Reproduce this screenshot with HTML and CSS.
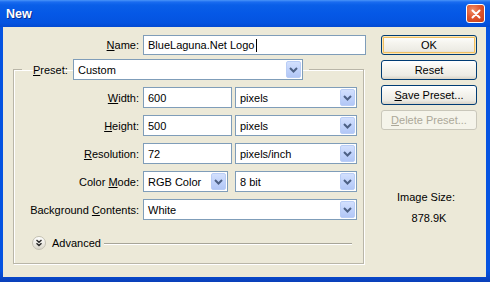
FILE: index.html
```html
<!DOCTYPE html>
<html lang="en">
<head>
    <meta charset="UTF-8">
    <title>New</title>
    <link rel="stylesheet" href="styles.css">
</head>
<body>

    <div class="window">
        <div class="titlebar">
            <span class="title">New</span>
            <span class="close">
                <svg width="16" height="16" viewBox="0 0 16 16">
                    <path d="M4.5 4.5 L11.5 11.5 M11.5 4.5 L4.5 11.5" stroke="#fff" stroke-width="2" stroke-linecap="round"/>
                </svg>
            </span>
        </div>

        <div class="client">
            <div class="main">
                <div class="row">
                    <label class="lbl"><u>N</u>ame:</label>
                    <div class="field name-field">BlueLaguna.Net Logo<span class="caret"></span></div>
                </div>

                <fieldset class="group">
                    <legend class="preset">
                        <label class="preset-lbl"><u>P</u>reset:</label>
                        <div class="combo preset-combo"><span class="val">Custom</span><span class="arrow"><svg width="9" height="6" viewBox="0 0 9 6"><path d="M1 1 L4.5 4.5 L8 1" fill="none" stroke="#4d6185" stroke-width="2"/></svg></span></div>
                    </legend>

                    <div class="row">
                        <label class="lbl"><u>W</u>idth:</label>
                        <div class="field num">600</div>
                        <div class="combo unit"><span class="val">pixels</span><span class="arrow"><svg width="9" height="6" viewBox="0 0 9 6"><path d="M1 1 L4.5 4.5 L8 1" fill="none" stroke="#4d6185" stroke-width="2"/></svg></span></div>
                    </div>

                    <div class="row">
                        <label class="lbl"><u>H</u>eight:</label>
                        <div class="field num">500</div>
                        <div class="combo unit"><span class="val">pixels</span><span class="arrow"><svg width="9" height="6" viewBox="0 0 9 6"><path d="M1 1 L4.5 4.5 L8 1" fill="none" stroke="#4d6185" stroke-width="2"/></svg></span></div>
                    </div>

                    <div class="row">
                        <label class="lbl"><u>R</u>esolution:</label>
                        <div class="field num">72</div>
                        <div class="combo unit"><span class="val">pixels/inch</span><span class="arrow"><svg width="9" height="6" viewBox="0 0 9 6"><path d="M1 1 L4.5 4.5 L8 1" fill="none" stroke="#4d6185" stroke-width="2"/></svg></span></div>
                    </div>

                    <div class="row">
                        <label class="lbl">Color <u>M</u>ode:</label>
                        <div class="combo mode"><span class="val">RGB Color</span><span class="arrow"><svg width="9" height="6" viewBox="0 0 9 6"><path d="M1 1 L4.5 4.5 L8 1" fill="none" stroke="#4d6185" stroke-width="2"/></svg></span></div>
                        <div class="combo unit depth"><span class="val">8 bit</span><span class="arrow"><svg width="9" height="6" viewBox="0 0 9 6"><path d="M1 1 L4.5 4.5 L8 1" fill="none" stroke="#4d6185" stroke-width="2"/></svg></span></div>
                    </div>

                    <div class="row">
                        <label class="lbl">Background <u>C</u>ontents:</label>
                        <div class="combo wide"><span class="val">White</span><span class="arrow"><svg width="9" height="6" viewBox="0 0 9 6"><path d="M1 1 L4.5 4.5 L8 1" fill="none" stroke="#4d6185" stroke-width="2"/></svg></span></div>
                    </div>

                    <div class="advanced">
                        <span class="adv-icon">
                            <svg width="14" height="14" viewBox="0 0 14 14">
                                <path d="M4.5 4 L7 6.3 L9.5 4 M4.5 7.3 L7 9.6 L9.5 7.3" fill="none" stroke="#2b2b2b" stroke-width="1.4"/>
                            </svg>
                        </span>
                        <span class="adv-text">Advanced</span>
                        <span class="adv-line"></span>
                    </div>
                </fieldset>
            </div>

            <div class="side">
                <button class="btn default">OK</button>
                <button class="btn">Reset</button>
                <button class="btn"><u>S</u>ave Preset...</button>
                <button class="btn disabled"><u>D</u>elete Preset...</button>

                <div class="info">
                    <div class="info-lbl">Image Size:</div>
                    <div class="info-val">878.9K</div>
                </div>
            </div>
        </div>
    </div>

</body>
</html>
```

FILE: styles.css
```css
:root {
    --xp-blau: #0553e1;
    --dialog: #ece9d8;
    --feld-rand: #7f9db9;
    --knopf-rand: #003c74;
}

body {
    margin: 0;
    font-family: "Liberation Sans", Arial, sans-serif;
    font-size: 11px;
    color: #000;
}

.window {
    width: 490px;
    height: 282px;
    display: flex;
    flex-direction: column;
    background: linear-gradient(to bottom, var(--xp-blau) 0, var(--xp-blau) 96%, #0a3fb8 100%);
}

.titlebar {
    height: 27px;
    display: flex;
    align-items: center;
    justify-content: space-between;
    padding: 0 5px 0 6px;
    background: linear-gradient(to bottom, #4a95f8 0, #1a6cf0 2px, #0a5fe8 5px, #0558e6 50%, #0453e0 85%, #034ad2 100%);
}

.title {
    color: #fff;
    font-weight: bold;
    font-size: 12.5px;
    text-shadow: 1px 1px 0 #0a2a8a;
    margin-top: 1px;
}

.close {
    width: 17px;
    height: 17px;
    border: 1px solid #fff;
    border-radius: 3px;
    background: radial-gradient(circle at 35% 30%, #f0906a 0, #e0572f 45%, #c63d18 100%);
    display: flex;
    align-items: center;
    justify-content: center;
}

.client {
    flex: 1;
    margin: 0 4px 5px 3px;
    background-color: var(--dialog);
    display: flex;
}

.main {
    width: 368px;
    padding: 8px 0 0 10px;
}

.row {
    display: flex;
    align-items: center;
    height: 21px;
}

.row + .row {
    margin-top: 7px;
}

.main > .row {
    height: 20px;
}

.lbl {
    width: 126px;
    padding-right: 4px;
    text-align: right;
    flex-shrink: 0;
}

.group .lbl {
    width: 125px;
}

.field {
    height: 100%;
    box-sizing: border-box;
    border: 1px solid var(--feld-rand);
    background-color: #fff;
    padding-left: 4px;
    line-height: 18px;
    display: flex;
    align-items: center;
}

.name-field {
    width: 223px;
}

.caret {
    width: 1px;
    height: 13px;
    margin-left: 2px;
    background-color: #000;
}

.num {
    width: 89px;
    margin-right: 3px;
}

.group {
    width: 351px;
    box-sizing: border-box;
    margin: 4px 0 0 0;
    padding: 7px 6px 13px 0;
    border: 1px solid #b9b6a8;
    box-shadow: 1px 1px 0 #fff, inset 1px 1px 0 #fff;
}

.preset {
    display: flex;
    align-items: center;
    margin-left: 8px;
    padding: 0 6px 0 11px;
}

.preset-lbl {
    width: 40px;
}

.combo {
    height: 21px;
    box-sizing: border-box;
    border: 1px solid var(--feld-rand);
    background-color: #fff;
    display: flex;
    align-items: center;
}

.combo .val {
    flex: 1;
    padding-left: 4px;
}

.arrow {
    width: 15px;
    height: 17px;
    margin: 1px;
    box-sizing: border-box;
    border: 1px solid #b9cdf6;
    border-radius: 2px;
    background: linear-gradient(to bottom, #d3e0fd 0, #c1d3fb 50%, #b2c7f6 100%);
    display: flex;
    align-items: center;
    justify-content: center;
}

.preset-combo {
    width: 230px;
}

.unit {
    width: 122px;
}

.mode {
    width: 85px;
}

.depth {
    margin-left: 7px;
}

.wide {
    width: 214px;
}

.advanced {
    display: flex;
    align-items: center;
    height: 14px;
    margin-top: 16px;
    padding-left: 18px;
}

.adv-icon {
    width: 14px;
    height: 14px;
    box-sizing: border-box;
    border: 1px solid #c3c0b2;
    border-radius: 50%;
    background: linear-gradient(to bottom, #ffffff 0, #ebe9e0 60%, #d9d6ca 100%);
    display: flex;
    align-items: center;
    justify-content: center;
}

.adv-icon svg {
    margin: -1px;
}

.adv-text {
    margin-left: 6px;
}

.adv-line {
    flex: 1;
    height: 0;
    margin: 1px 5px 0 3px;
    border-top: 1px solid #a7a598;
    border-bottom: 1px solid #fff;
}

.side {
    width: 96px;
    padding-top: 8px;
    display: flex;
    flex-direction: column;
    gap: 5px;
}

.btn {
    height: 20px;
    width: 96px;
    padding: 0;
    font-family: inherit;
    font-size: 11px;
    color: #000;
    border: 1px solid var(--knopf-rand);
    border-radius: 3px;
    background: linear-gradient(to bottom, #ffffff 0, #f5f4ee 40%, #ecebe4 80%, #d8d3c6 100%);
}

.btn.default {
    box-shadow: inset 0 0 0 1px #fce7b6, inset 0 0 0 2px #f0bf62;
}

.btn.disabled {
    color: #aca899;
    border-color: #c9c7ba;
    background: #f5f4ea;
}

.info {
    margin-top: 55px;
    text-align: center;
    line-height: 14px;
}

.info-lbl {
    margin-right: 6px;
}

.info-val {
    margin-top: 7px;
}
```
